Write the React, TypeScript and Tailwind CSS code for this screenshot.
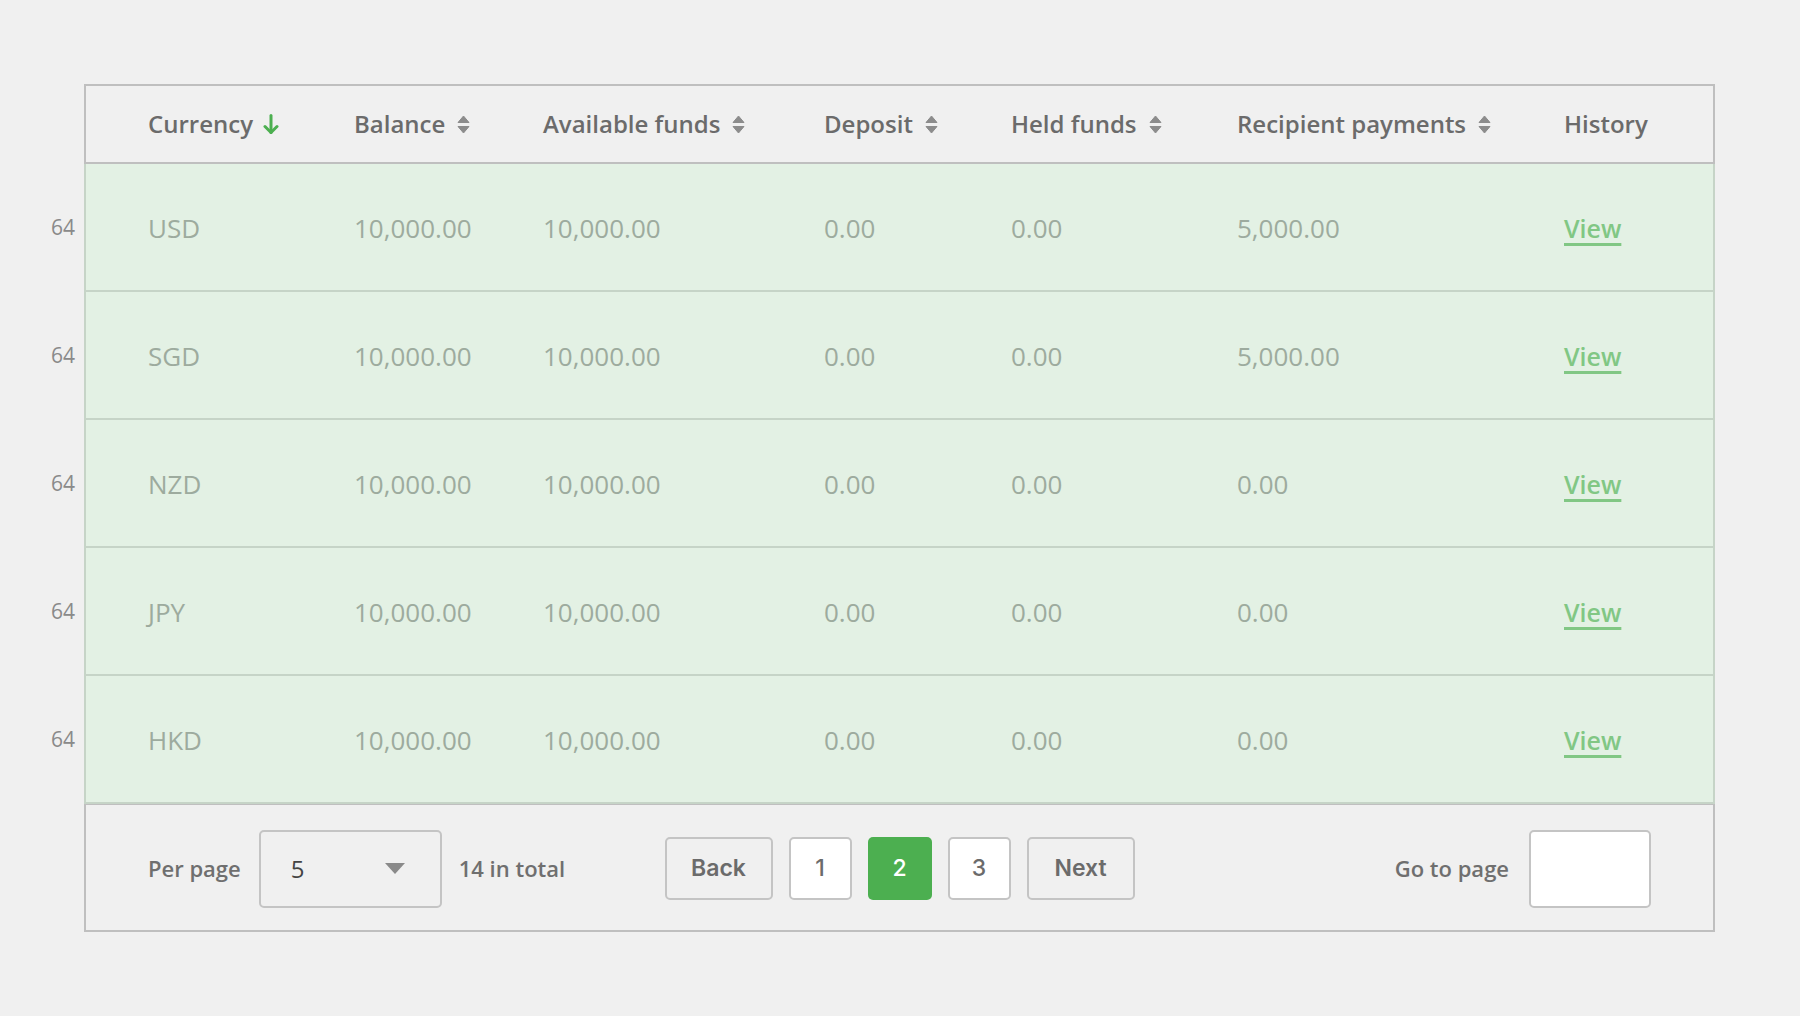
import React from "react";

const rows = [
  { cur: "USD", bal: "10,000.00", avail: "10,000.00", dep: "0.00", held: "0.00", rec: "5,000.00" },
  { cur: "SGD", bal: "10,000.00", avail: "10,000.00", dep: "0.00", held: "0.00", rec: "5,000.00" },
  { cur: "NZD", bal: "10,000.00", avail: "10,000.00", dep: "0.00", held: "0.00", rec: "0.00" },
  { cur: "JPY", bal: "10,000.00", avail: "10,000.00", dep: "0.00", held: "0.00", rec: "0.00" },
  { cur: "HKD", bal: "10,000.00", avail: "10,000.00", dep: "0.00", held: "0.00", rec: "0.00" },
];

const cols = "grid grid-cols-[206px_189px_281px_187px_226px_327px_86px] items-center";

function SortIcon() {
  return (
    <svg width="13" height="19" viewBox="0 0 13 19" className="ml-3 shrink-0">
      <path d="M6.5 1 L12 7.5 L1 7.5 Z" fill="#8c8c8c" stroke="#8c8c8c" strokeWidth="1" strokeLinejoin="round" />
      <path d="M6.5 18 L12 11.5 L1 11.5 Z" fill="#8c8c8c" stroke="#8c8c8c" strokeWidth="1" strokeLinejoin="round" />
    </svg>
  );
}

function DownArrow() {
  return (
    <svg width="16" height="21" viewBox="0 0 16 21" className="ml-[10px] shrink-0">
      <path d="M8 1.5 V18.5" stroke="#4caf50" strokeWidth="3" strokeLinecap="round" fill="none" />
      <path d="M2 12.5 L8 18.5 L14 12.5" stroke="#4caf50" strokeWidth="3" strokeLinecap="round" strokeLinejoin="round" fill="none" />
    </svg>
  );
}

function Head({ label, sort, active }: { label: string; sort?: boolean; active?: boolean }) {
  return (
    <div className="flex items-center">
      <span>{label}</span>
      {active ? <DownArrow /> : sort ? <SortIcon /> : null}
    </div>
  );
}

export default function App() {
  return (
    <div className="min-h-screen bg-[#f0f0f0] pt-[84px] font-['Open_Sans',sans-serif]">
      {/* header */}
      <div className="flex">
        <div className="w-[84px] shrink-0" />
        <div className={`${cols} w-[1631px] h-[80px] border-2 border-[#bfbfbf] pl-[62px] pr-[62px] text-[24px] font-semibold text-[#6b6b6b]`}>
          <Head label="Currency" active />
          <Head label="Balance" sort />
          <Head label="Available funds" sort />
          <Head label="Deposit" sort />
          <Head label="Held funds" sort />
          <Head label="Recipient payments" sort />
          <Head label="History" />
        </div>
      </div>

      {/* rows */}
      {rows.map((r) => (
        <div key={r.cur} className="flex">
          <div className="w-[84px] shrink-0 flex items-center justify-end pr-[9px] pb-[1px] text-[21px] text-[#8a8a8a]">
            64
          </div>
          <div className={`${cols} w-[1631px] h-[128px] bg-[#e3f1e4] border-x-2 border-b-2 border-[#c6d4c7] pl-[62px] pr-[62px] pt-[3px] text-[26px] text-[#9dab9e]`}>
            <div>{r.cur}</div>
            <div>{r.bal}</div>
            <div>{r.avail}</div>
            <div>{r.dep}</div>
            <div>{r.held}</div>
            <div>{r.rec}</div>
            <div>
              <a href="#" className="font-semibold text-[25px] text-[#81c784] underline decoration-[3px] underline-offset-[5px]">
                View
              </a>
            </div>
          </div>
        </div>
      ))}

      {/* footer */}
      <div className="flex">
        <div className="w-[84px] shrink-0" />
        <div className="grid grid-cols-[1fr_auto_1fr] items-center w-[1631px] h-[128px] border-x-2 border-b-2 border-t border-[#bfbfbf] pl-[62px] pr-[62px] pt-[2px] text-[22px] font-semibold text-[#6f6f6f]">
          <div className="flex items-center">
            <span>Per page</span>
            <div className="ml-[18px] flex items-center justify-between w-[183px] h-[78px] rounded-[5px] border-2 border-[#c4c4c4] pl-[30px] pr-[35px]">
              <span className="text-[24px] font-normal text-[#444]">5</span>
              <svg width="20" height="11" viewBox="0 0 20 11">
                <path d="M0 0 H20 L10 11 Z" fill="#8a8a8a" />
              </svg>
            </div>
            <span className="ml-[17px]">14 in total</span>
          </div>

          <div className="flex items-center gap-4 font-['Inter',sans-serif] text-[23px] font-semibold">
            <button className="w-[108px] h-[63px] rounded-[5px] border-2 border-[#c4c4c4] text-[#6b6b6b]">Back</button>
            <button className="w-[63px] h-[63px] rounded-[5px] border-2 border-[#c4c4c4] bg-white text-[#6b6b6b] font-medium">1</button>
            <button className="w-[64px] h-[63px] rounded-[5px] bg-[#4caf50] text-white font-medium">2</button>
            <button className="w-[63px] h-[63px] rounded-[5px] border-2 border-[#c4c4c4] bg-white text-[#6b6b6b] font-medium">3</button>
            <button className="w-[108px] h-[63px] rounded-[5px] border-2 border-[#c4c4c4] text-[#6b6b6b]">Next</button>
          </div>

          <div className="flex items-center justify-end">
            <span>Go to page</span>
            <input className="ml-5 w-[122px] h-[78px] rounded-[5px] border-2 border-[#c4c4c4] bg-white outline-none px-3 text-[24px]" />
          </div>
        </div>
      </div>
    </div>
  );
}
